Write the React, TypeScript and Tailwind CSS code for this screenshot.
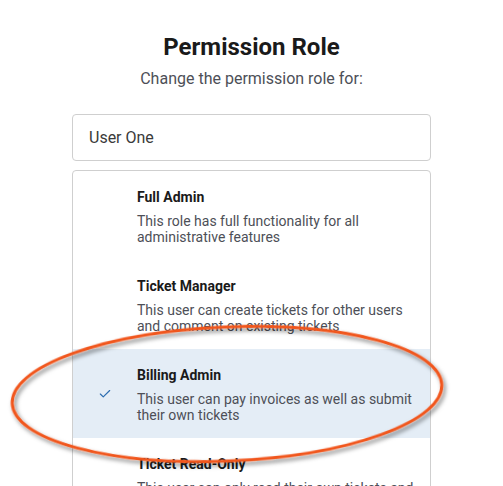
import { Check } from 'lucide-react';

const roles = [
  {
    name: 'Full Admin',
    desc: 'This role has full functionality for all administrative features',
  },
  {
    name: 'Ticket Manager',
    desc: 'This user can create tickets for other users and comment on existing tickets',
  },
  {
    name: 'Billing Admin',
    desc: 'This user can pay invoices as well as submit their own tickets',
    selected: true,
  },
  {
    name: 'Ticket Read-Only',
    desc: 'This user can only read their own tickets and comment on them',
  },
];

export default function App() {
  return (
    <div
      className="relative w-[503px] h-[486px] overflow-hidden bg-white"
      style={{ fontFamily: 'Roboto, "Liberation Sans", sans-serif' }}
    >
      <div className="mx-auto w-[359px] pt-[33px]">
        <h1 className="text-center text-[24px] leading-[28px] font-bold text-[#1a1a1a]">Permission Role</h1>
        <p className="mt-2 text-center text-[16px] leading-5 text-[#4d4f57]">Change the permission role for:</p>

        <div className="mt-[25px] h-[47px] flex items-center px-4 border border-[#cfcfcf] rounded-[4px] text-[16px] text-[#3a3a3a]">
          User One
        </div>

        <div className="mt-[9px] border border-[#cfcfcf] rounded-[4px]">
          {roles.map(role => (
            <div
              key={role.name}
              className={
                role.selected
                  ? 'flex items-center h-[89px] bg-[#e4edf6]'
                  : 'flex items-center h-[89px]'
              }
            >
              <div className="w-16 shrink-0 flex justify-center">
                {role.selected && <Check className="w-[14px] h-[14px] text-[#2b6cb0]" strokeWidth={2} />}
              </div>
              <div className="flex-1 pr-4">
                <div className="text-[14px] leading-5 font-bold text-[#1a1a1a]">{role.name}</div>
                <div className="mt-[6px] text-[14px] leading-4 text-[#4d4f57]">{role.desc}</div>
              </div>
            </div>
          ))}
        </div>
      </div>

      <svg className="absolute inset-0 pointer-events-none" width="503" height="486">
        <defs>
          <filter id="shadow" x="-10%" y="-20%" width="120%" height="140%">
            <feDropShadow dx="2" dy="3" stdDeviation="2" floodColor="#000" floodOpacity="0.5" />
          </filter>
        </defs>
        <ellipse
          cx="227"
          cy="394"
          rx="215"
          ry="67"
          transform="rotate(-2.5 227 394)"
          fill="none"
          stroke="#f1561f"
          strokeWidth="3"
          filter="url(#shadow)"
        />
      </svg>
    </div>
  );
}
